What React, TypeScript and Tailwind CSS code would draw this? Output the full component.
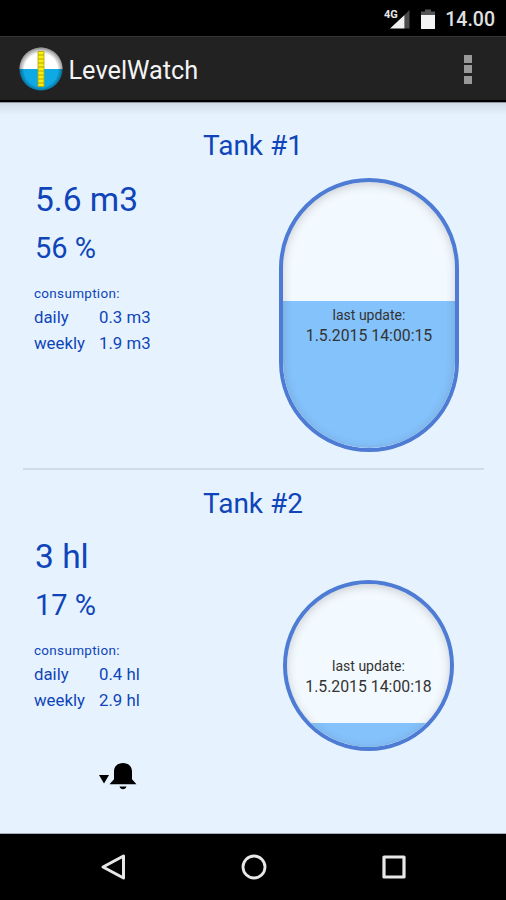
import React from 'react';

interface Tank {
  name: string;
  volume: string;
  percent: string;
  daily: string;
  weekly: string;
  updated: string;
}

const tanks: Tank[] = [
  { name: 'Tank #1', volume: '5.6 m3', percent: '56 %', daily: '0.3 m3', weekly: '1.9 m3', updated: '1.5.2015 14:00:15' },
  { name: 'Tank #2', volume: '3 hl', percent: '17 %', daily: '0.4 hl', weekly: '2.9 hl', updated: '1.5.2015 14:00:18' },
];

const StatusBar: React.FC = () => (
  <div className="flex h-9 shrink-0 items-center justify-end bg-black pt-[3px] pr-[11px] text-[#e0e0e0]">
    <svg width="28" height="24" viewBox="0 0 28 24" className="mr-[10px]">
      <path d="M26.500 2v18.500h-5V7z" fill="#4a4a4a" />
      <path d="M21.500 7v13.500H7z" fill="#f0f0f0" />
      <path d="M0 0h15v11H0z" fill="#000" />
      <text x="1" y="10" fontSize="11" fontWeight="700" fontFamily="Roboto, sans-serif" fill="#e8e8e8">4G</text>
    </svg>
    <svg width="14" height="22" viewBox="0 0 14 22" className="mr-[10px]">
      <path d="M4 0.500h6v2h4v5H0v-5h4z" fill="#555" />
      <path d="M0 6h14v14H0z" fill="#f4f4f4" />
    </svg>
    <span className="text-[19.5px] leading-6 font-medium">14.00</span>
  </div>
);

const AppIcon: React.FC = () => (
  <svg width="44" height="44" viewBox="0 0 44 44">
    <defs>
      <clipPath id="ball">
        <circle cx="22" cy="22" r="21.5" />
      </clipPath>
      <radialGradient id="shade">
        <stop offset="0.72" stopColor="#000" stopOpacity="0" />
        <stop offset="1" stopColor="#000" stopOpacity="0.5" />
      </radialGradient>
    </defs>
    <g clipPath="url(#ball)">
      <path d="M0 0h44v22H0z" fill="#fff" />
      <path d="M0 22h44v22H0z" fill="#0fa9e6" />
      <circle cx="22" cy="23" r="23" fill="url(#shade)" />
      <path d="M19 4.500h6v35h-6z" fill="#f8ee10" stroke="#b5a800" strokeWidth="0.8" />
      <path d="M19 8h6M19 12h6M19 16h6M19 20h6M19 24h6M19 28h6M19 32h6M19 36h6" stroke="#a39a00" strokeWidth="0.8" />
    </g>
  </svg>
);

const ActionBar: React.FC = () => (
  <header className="flex h-[66px] shrink-0 items-center border-t border-b-2 border-t-[#363636] border-b-black bg-[#222] pt-px pr-[34px] pl-[18.5px]">
    <AppIcon />
    <h1 className="mt-1 ml-[6px] text-[25.3px] leading-8 text-[#f4f4f4]">LevelWatch</h1>
    <div className="ml-auto flex flex-col gap-[2.5px]">
      <span className="size-2 bg-[#999]" />
      <span className="size-2 bg-[#999]" />
      <span className="size-2 bg-[#999]" />
    </div>
  </header>
);

const Readings: React.FC<{ tank: Tank }> = ({ tank }) => (
  <div className="flex w-[245px] flex-col">
    <p className="ml-px text-[33.5px] leading-10">{tank.volume}</p>
    <p className="mt-2.5 ml-px text-[29px] leading-9">{tank.percent}</p>
    <p className="mt-[19px] text-[13.5px] leading-4 tracking-[0.3px]">consumption:</p>
    <dl className="mt-1 grid grid-cols-[65px_1fr] text-[16.8px] leading-[25.5px]">
      <dt>daily</dt>
      <dd>{tank.daily}</dd>
      <dt>weekly</dt>
      <dd>{tank.weekly}</dd>
    </dl>
  </div>
);

interface VesselProps {
  className: string;
  fill: string;
  label: string;
  updated: string;
}

const Vessel: React.FC<VesselProps> = ({ className, fill, label, updated }) => (
  <div className={`relative flex flex-col justify-end overflow-hidden rounded-full border-4 border-[#4e7cd5] bg-[#f3faff] ${className}`}>
    <div className={`bg-[#84c2fb] ${fill}`} />
    <div className="absolute inset-0 rounded-full shadow-[inset_0_2px_10px_rgba(70,60,60,0.24)]" />
    <div className={`absolute inset-x-0 text-center whitespace-nowrap text-[#333] ${label}`}>
      <p className="text-[14px] leading-5">last update:</p>
      <p className="text-[15.8px] leading-[21px]">{updated}</p>
    </div>
  </div>
);

const App: React.FC = () => {
  return (
    <div className="flex h-[900px] w-[506px] flex-col overflow-hidden bg-black font-['Roboto',sans-serif]">
      <StatusBar />
      <ActionBar />
      <main className="flex h-[732px] shrink-0 flex-col border-b border-[#a5b0ba] bg-[#e6f3ff] text-[#0f45b8]">
        <div className="h-px bg-[#8d979f]" />
        <div className="-mb-3 h-3 shrink-0 bg-linear-to-b from-[#d0dde8] to-[#e6f3ff]" />
        <section className="mx-[22.5px] h-[367px] shrink-0 border-b-2 border-[#cfdbe6] pt-[27px]">
          <h2 className="text-center text-[28px] leading-8">{tanks[0].name}</h2>
          <div className="flex pt-4 pl-[11.5px]">
            <div className="pt-0.5">
              <Readings tank={tanks[0]} />
            </div>
            <Vessel className="h-[274px] w-[180px]" fill="h-[147px]" label="top-[123px]" updated={tanks[0].updated} />
          </div>
        </section>
        <section className="mx-[22.5px] pt-[18px]">
          <h2 className="text-center text-[28px] leading-8">{tanks[1].name}</h2>
          <div className="flex pt-[17px] pl-[11.5px]">
            <div>
              <Readings tank={tanks[1]} />
              <svg width="40" height="28" viewBox="0 0 40 28" className="mt-[49px] ml-[64px]">
                <path d="M1 13h10l-5 8.500z" fill="#000" />
                <path d="M11.500 22.300l4.500-5V9.500C16 4.500 19.500 1 25 1S34 4.500 34 9.500v7.800l4.500 5zM21.500 24.500h7c-1 3.500-6 3.500-7 0z" fill="#000" />
              </svg>
            </div>
            <Vessel className="mt-[43px] ml-1 size-[171px]" fill="h-[24px]" label="top-[72px]" updated={tanks[1].updated} />
          </div>
        </section>
      </main>
      <nav className="flex flex-1 items-center justify-between pr-[99px] pl-[100px]">
        <svg width="26" height="28" viewBox="0 0 26 28" fill="none" stroke="#e8e8e8" strokeWidth="3" strokeLinejoin="round">
          <path d="M3 14L23.500 3v22z" />
        </svg>
        <svg width="26" height="26" viewBox="0 0 26 26" fill="none" stroke="#e8e8e8" strokeWidth="2.800">
          <circle cx="13" cy="13" r="11" />
        </svg>
        <svg width="26" height="26" viewBox="0 0 26 26" fill="none" stroke="#e8e8e8" strokeWidth="3.200" strokeLinejoin="round">
          <path d="M3 3h20v20H3z" />
        </svg>
      </nav>
    </div>
  );
};

export default App;
